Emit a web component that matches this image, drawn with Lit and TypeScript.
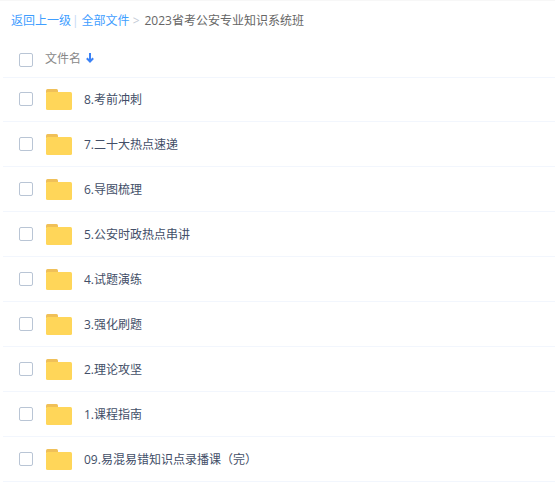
import { LitElement, html, css } from "lit";
import { customElement } from "lit/decorators.js";

const rows = ["8.考前冲刺","7.二十大热点速递","6.导图梳理","5.公安时政热点串讲","4.试题演练","3.强化刷题","2.理论攻坚","1.课程指南","09.易混易错知识点录播课（完）"];

@customElement("app-root")
export class AppRoot extends LitElement {
  static styles = css`
    :host { display:block; width:555px; height:486px; overflow:hidden; background:#fff; box-sizing:border-box; border-top:1px solid #f7f7f7;
      font-family:"Open Sans","Noto Sans CJK SC",sans-serif; font-size:12px; color:#424e67; }
    .crumbs { display:flex; align-items:center; height:38px; padding-left:11px; white-space:nowrap; }
    .link { color:#3f9eff; }
    .sep { color:#c4d8f4; margin:0 3px 0 1px; }
    .gt { color:#c4cbd6; margin:0 5px 0 3px; }
    .cur { color:#666; }
    .list { margin-left:3px; }
    .head, .row { display:flex; align-items:center; border-bottom:1px solid #f2f6fd; box-sizing:border-box; }
    .head { height:39px; color:#888; }
    .head .box { margin-top:4px; }
    .row { height:45px; }
    .head + .row { height:44px; padding-bottom:1px; }
    .box { width:14px; height:14px; box-sizing:border-box; border:1px solid #b9c5d5; border-radius:2px; margin-left:16px; flex:none; }
    .hname { margin-left:12px; }
    .arrow { margin-left:5px; display:block; }
    .folder { margin-left:13px; flex:none; display:block; }
    .name { margin-left:12px; white-space:nowrap; }
  `;
  render() {
    return html`
      <div class="crumbs"><span class="link">返回上一级</span><span class="sep">|</span><span class="link">全部文件</span><span class="gt">&gt;</span><span class="cur">2023省考公安专业知识系统班</span></div>
      <div class="list">
        <div class="head"><span class="box"></span><span class="hname">文件名</span>
          <svg class="arrow" width="8" height="10" viewBox="0 0 8 10"><path d="M4 0v8.500M.8 5.200 4 8.500l3.200-3.300" fill="none" stroke="#3b82f6" stroke-width="2"/></svg>
        </div>
        ${rows.map(r => html`<div class="row"><span class="box"></span>
          <svg class="folder" width="26" height="21" viewBox="0 0 26 21"><path d="M1.500 0h9Q12 0 12 1.500V4H0V1.500Q0 0 1.500 0z" fill="#f0c058"/><path d="M1.500 3H24.500Q26 3 26 4.500V19.500Q26 21 24.500 21H1.500Q0 21 0 19.500V4.500Q0 3 1.500 3z" fill="#ffd659"/></svg>
          <span class="name">${r}</span></div>`)}
      </div>`;
  }
}
